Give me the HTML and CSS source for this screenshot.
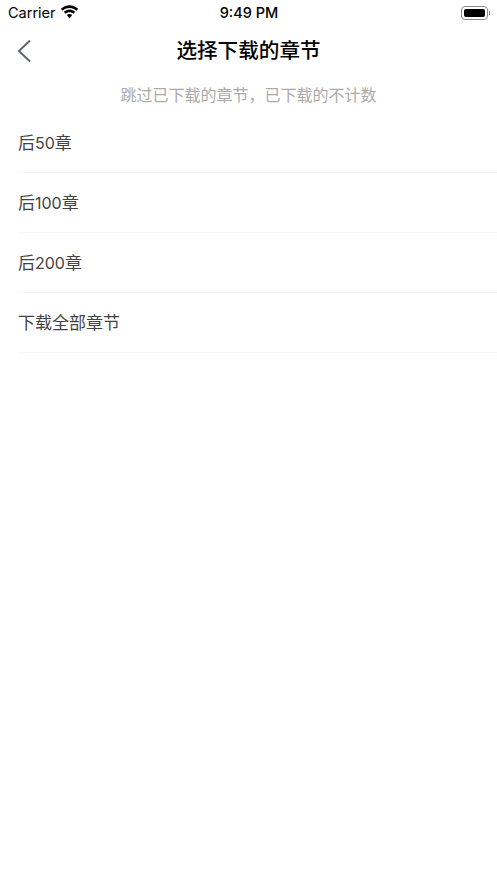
FILE: index.html
```html
<!DOCTYPE html>
<html lang="zh-CN">

<head>
    <meta charset="UTF-8">
    <meta name="viewport" content="width=device-width, initial-scale=1.0">
    <title>选择下载的章节</title>
    <link rel="stylesheet" href="styles.css">
</head>

<body>
    <div class="status-bar">
        <div class="status-left">
            <span class="carrier">Carrier</span>
            <svg class="wifi" width="19" height="14" viewBox="0 0 18 13">
                <path d="M9 2.600c2.500 0 4.800 1 6.500 2.600l1.700-1.700C15.100 1.400 12.200 0 9 0S2.900 1.400.8 3.500l1.700 1.700C4.200 3.600 6.500 2.600 9 2.600z" fill="#000"/>
                <path d="M9 6.700c1.400 0 2.600.5 3.600 1.400l1.800-1.800C13 5 11.100 4.100 9 4.100S5 5 3.600 6.300l1.800 1.800c1-.9 2.200-1.400 3.600-1.400z" fill="#000"/>
                <path d="M9 8.300c-1 0-1.900.4-2.500 1L9 12.600l2.500-3.300c-.6-.6-1.500-1-2.500-1z" fill="#000"/>
            </svg>
        </div>
        <span class="clock">9:49 PM</span>
        <div class="battery">
            <div class="battery-body"><div class="battery-fill"></div></div>
            <div class="battery-cap"></div>
        </div>
    </div>

    <header class="nav-bar">
        <svg class="back" width="14" height="24" viewBox="0 0 14 24">
            <path d="M13 1.500 2 12l11 10.500" fill="none" stroke="#5d6670" stroke-width="2"/>
        </svg>
        <h1 class="title">选择下载的章节</h1>
    </header>

    <p class="hint">跳过已下载的章节，已下载的不计数</p>

    <ul class="chapter-list">
        <li class="chapter-item"><span>后<span class="num">50</span>章</span></li>
        <li class="chapter-item"><span>后<span class="num">100</span>章</span></li>
        <li class="chapter-item"><span>后<span class="num">200</span>章</span></li>
        <li class="chapter-item">下载全部章节</li>
    </ul>
</body>

</html>
```

FILE: styles.css
```css
* {
    box-sizing: border-box;
}

body {
    margin: 0;
    background-color: #fff;
    font-family: Inter, "Noto Sans CJK SC", "Liberation Sans", sans-serif;
}

.status-bar {
    height: 25px;
    padding: 0 7px 0 8px;
    display: flex;
    align-items: center;
    justify-content: space-between;
    font-size: 14.5px;
    color: #000;
}

.status-left {
    display: flex;
    align-items: center;
    gap: 4px;
    width: 120px;
}

.wifi {
    margin-top: -2px;
}

.clock {
    font-weight: 500;
}

.battery {
    width: 120px;
    display: flex;
    align-items: center;
    justify-content: flex-end;
    gap: 1px;
}

.battery-body {
    width: 27px;
    height: 14px;
    padding: 2px;
    border: 1px solid #8a8a8a;
    border-radius: 4px;
}

.battery-fill {
    height: 100%;
    background-color: #000;
    border-radius: 2px;
}

.battery-cap {
    width: 1px;
    height: 4px;
    background-color: #8a8a8a;
}

.nav-bar {
    height: 51px;
    position: relative;
    display: flex;
    align-items: center;
    justify-content: center;
}

.back {
    position: absolute;
    left: 17px;
    top: 14px;
}

.title {
    margin: 0;
    font-size: 20.6px;
    font-weight: 500;
    line-height: 51px;
    color: #000;
}

.hint {
    margin: 0;
    height: 37px;
    padding-top: 7px;
    text-align: center;
    font-size: 16px;
    line-height: 24px;
    color: #aaa;
}

.chapter-list {
    list-style: none;
    margin: 0;
    padding: 0 0 0 18px;
}

.chapter-item {
    height: 60px;
    padding-bottom: 2px;
    display: flex;
    align-items: center;
    font-size: 17px;
    color: #444;
    border-bottom: 1px solid #f5f5f5;
}

.num {
    font-size: 16px;
}
```
